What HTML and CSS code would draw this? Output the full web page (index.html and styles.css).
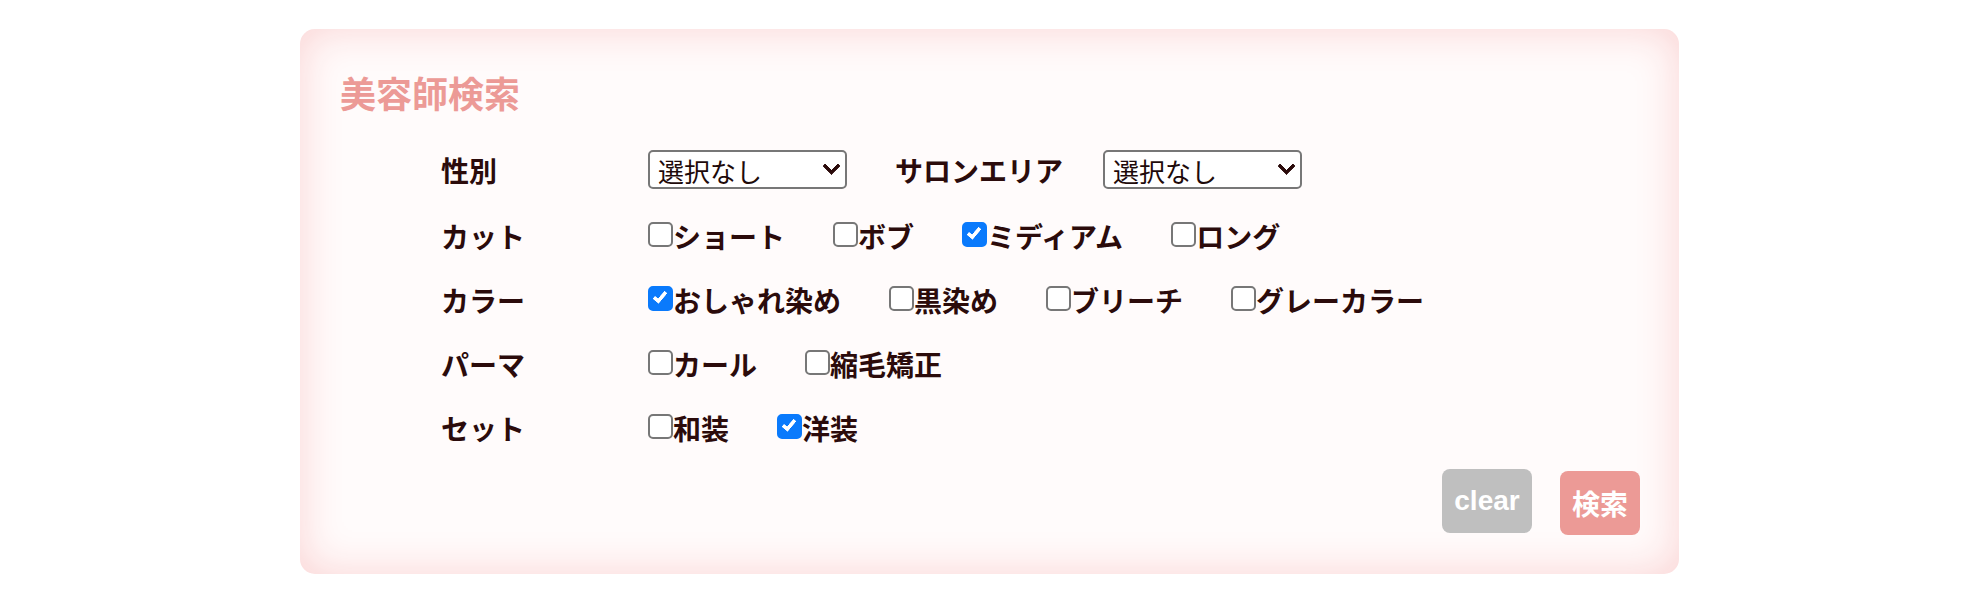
FILE: index.html
```html
<!DOCTYPE html>
<html lang="ja">
<head>
<meta charset="utf-8">
<title>美容師検索</title>
<link rel="stylesheet" href="styles.css">
</head>
<body>
<div class="panel">
  <h2 class="title">美容師検索</h2>
  <form class="form">
    <div class="row row-first">
      <span class="label">性別</span>
      <span class="select-wrap"><select class="select"><option>選択なし</option></select></span>
      <span class="label label-inline">サロンエリア</span>
      <span class="select-wrap"><select class="select"><option>選択なし</option></select></span>
    </div>
    <div class="row">
      <span class="label">カット</span>
      <div class="options">
        <label class="opt"><input type="checkbox" class="cb">ショート</label>
        <label class="opt"><input type="checkbox" class="cb">ボブ</label>
        <label class="opt"><input type="checkbox" class="cb" checked>ミディアム</label>
        <label class="opt"><input type="checkbox" class="cb">ロング</label>
      </div>
    </div>
    <div class="row">
      <span class="label">カラー</span>
      <div class="options">
        <label class="opt"><input type="checkbox" class="cb" checked>おしゃれ染め</label>
        <label class="opt"><input type="checkbox" class="cb">黒染め</label>
        <label class="opt"><input type="checkbox" class="cb">ブリーチ</label>
        <label class="opt"><input type="checkbox" class="cb">グレーカラー</label>
      </div>
    </div>
    <div class="row">
      <span class="label">パーマ</span>
      <div class="options">
        <label class="opt"><input type="checkbox" class="cb">カール</label>
        <label class="opt"><input type="checkbox" class="cb">縮毛矯正</label>
      </div>
    </div>
    <div class="row">
      <span class="label">セット</span>
      <div class="options">
        <label class="opt"><input type="checkbox" class="cb">和装</label>
        <label class="opt"><input type="checkbox" class="cb" checked>洋装</label>
      </div>
    </div>
    <div class="actions">
      <button type="button" class="btn btn-clear">clear</button>
      <button type="button" class="btn btn-search">検索</button>
    </div>
  </form>
</div>
</body>
</html>
```
FILE: styles.css
```css
html, body {
  margin: 0;
  padding: 0;
  background: #ffffff;
}
body {
  font-family: "Noto Sans CJK JP", "Noto Sans", sans-serif;
  color: #2b0b0b;
  padding: 29px 3px 0 0;
}
.panel {
  box-sizing: border-box;
  width: 1379px;
  margin: 0 auto;
  padding: 45px 39px 39px 40px;
  background: #fffbfb;
  border-radius: 15px;
  box-shadow: inset 0 0 44px 0 #fad3d3;
}
.title {
  margin: 0 0 37px 0;
  font-size: 36px;
  line-height: 36px;
  font-weight: 700;
  color: #ec9a96;
}
.form {
  margin: 0;
  padding-left: 101px;
  display: flex;
  flex-direction: column;
  gap: 24px;
}
.row {
  display: flex;
  align-items: center;
  height: 40px;
  font-size: 28px;
  line-height: 40px;
  font-weight: 700;
}
.row-first {
  height: 45px;
}
.label {
  width: 207px;
  flex-shrink: 0;
}
.label-inline {
  width: auto;
  margin: 0 40px 0 48px;
}
.select-wrap {
  position: relative;
  display: inline-block;
  height: 39px;
}
.select-wrap::after {
  content: "";
  position: absolute;
  right: 9px;
  top: calc(50% - 4px);
  width: 13px;
  height: 13px;
  box-sizing: border-box;
  border-right: 4px solid #2b0b0b;
  border-bottom: 4px solid #2b0b0b;
  border-radius: 1px;
  transform: translateY(-50%) rotate(45deg);
  pointer-events: none;
}
.select {
  appearance: none;
  -webkit-appearance: none;
  box-sizing: border-box;
  width: 199px;
  height: 39px;
  margin: 0;
  padding: 0 8px;
  border: 2px solid #777777;
  border-radius: 5px;
  background: #ffffff;
  font-family: "Noto Sans CJK JP", "Noto Sans", sans-serif;
  font-size: 26px;
  font-weight: 400;
  color: #1e0a0a;
}
.options {
  display: flex;
  align-items: center;
}
.opt {
  display: inline-flex;
  align-items: center;
  margin-right: 48px;
  white-space: nowrap;
}
.cb {
  appearance: none;
  -webkit-appearance: none;
  position: relative;
  box-sizing: border-box;
  width: 25px;
  height: 25px;
  margin: 0 0 3px 0;
  flex-shrink: 0;
  border: 2px solid #777777;
  border-radius: 5px;
  background: #ffffff;
}
.cb:checked {
  background: #0a7afc;
  border-color: #0a7afc;
}
.cb:checked::after {
  content: "";
  position: absolute;
  left: 6px;
  top: 1px;
  width: 8px;
  height: 14px;
  box-sizing: border-box;
  border-right: 4px solid #ffffff;
  border-bottom: 4px solid #ffffff;
  border-radius: 1px;
  transform: rotate(40deg);
}
.actions {
  display: flex;
  justify-content: flex-end;
  align-items: flex-start;
  gap: 28px;
  margin-top: -3px;
}
.btn {
  border: none;
  border-radius: 8px;
  height: 64px;
  padding: 0;
  color: #ffffff;
  font-weight: 700;
  cursor: pointer;
}
.btn-clear {
  width: 90px;
  background: #bfbfbf;
  font-family: "Liberation Sans", Arial, sans-serif;
  font-size: 28px;
}
.btn-search {
  width: 80px;
  margin-top: 2px;
  background: #ec9a96;
  font-family: "Noto Sans CJK JP", sans-serif;
  font-size: 28px;
}
```
